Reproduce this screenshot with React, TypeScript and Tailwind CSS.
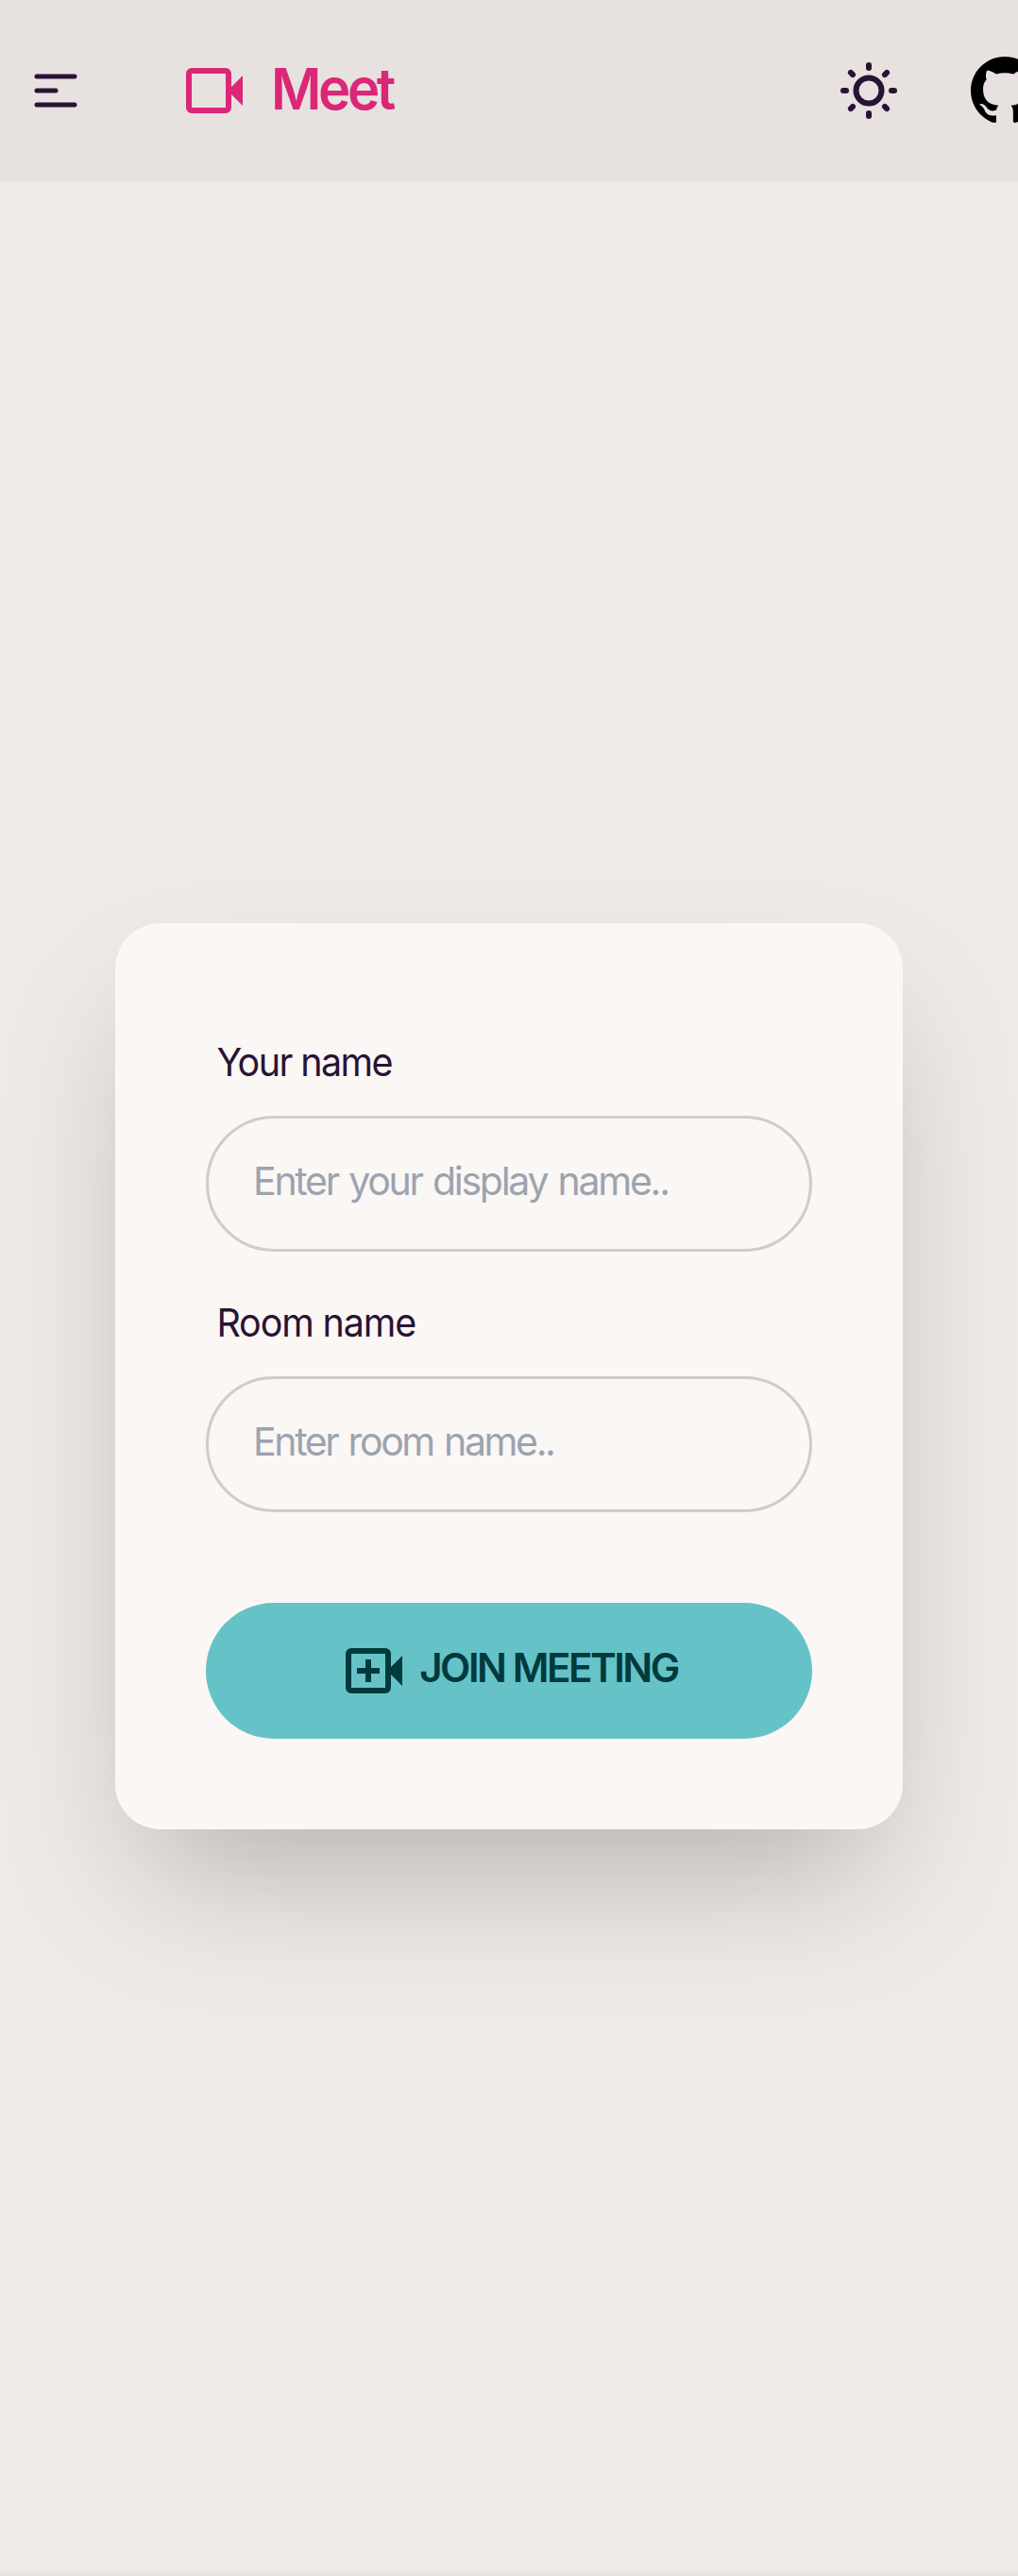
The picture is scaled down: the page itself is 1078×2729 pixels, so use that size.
import { SiGithub } from "react-icons/si";

function MenuIcon() {
  return (
    <svg className="size-[60px]" viewBox="0 0 24 24" fill="none" stroke="currentColor" strokeWidth="2" strokeLinecap="round">
      <path d="M4 6h16M4 12h8M4 18h16" />
    </svg>
  );
}

function VideoIcon({ plus = false }: { plus?: boolean }) {
  return (
    <svg className="size-[72px] shrink-0" viewBox="0 0 24 24" fill="currentColor">
      <path
        fillRule="evenodd"
        d="M4 4h12a2 2 0 0 1 2 2v4.67l4-4v10.66l-4-4V18a2 2 0 0 1-2 2H4a2 2 0 0 1-2-2V6a2 2 0 0 1 2-2Zm0 2v12h12V6Z"
      />
      {plus && <path d="M9 8h2v3h3v2h-3v3H9v-3H6v-2h3z" />}
    </svg>
  );
}

function SunIcon() {
  return (
    <svg className="size-[72px]" viewBox="0 0 24 24" fill="none" stroke="currentColor" strokeWidth="2" strokeLinecap="round">
      <circle cx="12" cy="12" r="4.5" />
      <path d="M12 3v1M12 20v1M21 12h-1M4 12H3M18.364 18.364l-.707-.707M6.343 6.343l-.707-.707M18.364 5.636l-.707.707M6.343 17.657l-.707.707" />
    </svg>
  );
}

type FieldProps = { label: string; placeholder: string; tracking: string; hintTracking: string };

function Field({ label, placeholder, tracking, hintTracking }: FieldProps) {
  return (
    <label className="flex flex-col">
      <span className={`origin-left scale-x-95 pt-[21px] pb-[27px] pl-3 text-[41.5px] leading-[60px] ${tracking}`}>{label}</span>
      <input
        type="text"
        placeholder={placeholder}
        className={`h-36 w-full rounded-full border-3 border-[#d1cace] bg-transparent pr-12 pb-1.5 pl-[47px] text-[41px] outline-none placeholder:text-[#9ca3af] [word-spacing:2px] ${hintTracking}`}
      />
    </label>
  );
}

export default function App() {
  return (
    <div className="flex h-[2729px] w-full flex-col overflow-hidden bg-[#efeae6] font-[Inter,sans-serif] text-[#291334]">
      <header className="flex h-48 shrink-0 items-center bg-[#e7e2df] pl-[29px]">
        <button type="button" aria-label="Menu">
          <MenuIcon />
        </button>
        <a className="ml-[102px] flex items-center gap-6 text-[#db2777]">
          <VideoIcon />
          <span className="origin-left scale-x-95 pb-[3px] text-[61px] leading-none font-semibold tracking-[-3.6px]">Meet</span>
        </a>
        <div className="ml-auto flex w-[194px] shrink-0 items-center gap-[72px]">
          <button type="button" aria-label="Theme" className="shrink-0">
            <SunIcon />
          </button>
          <SiGithub className="mb-0.5 size-[72px] shrink-0 text-black" />
        </div>
      </header>

      <main className="flex flex-1 flex-col items-center pt-[786px]">
        <form className="flex h-[960px] w-[834px] flex-col gap-6 rounded-[48px] bg-[#faf7f5] p-24 shadow-[0_75px_150px_-36px_rgba(0,0,0,0.25)]">
          <Field label="Your name" placeholder="Enter your display name.." tracking="tracking-[-1.65px]" hintTracking="tracking-[-2.26px]" />
          <Field label="Room name" placeholder="Enter room name.." tracking="tracking-[-1.16px]" hintTracking="tracking-[-2.37px]" />
          <button type="button" className="mt-[72px] flex h-36 shrink-0 items-center justify-center gap-3 rounded-full bg-[#65c3c8] text-[#003a3c]">
            <VideoIcon plus />
            <span className="pb-1.5 text-[42px] leading-none font-semibold tracking-[-2.45px]">JOIN MEETING</span>
          </button>
        </form>
      </main>
      <footer className="h-[5px] shrink-0 bg-[#e7e2df]" />
    </div>
  );
}
